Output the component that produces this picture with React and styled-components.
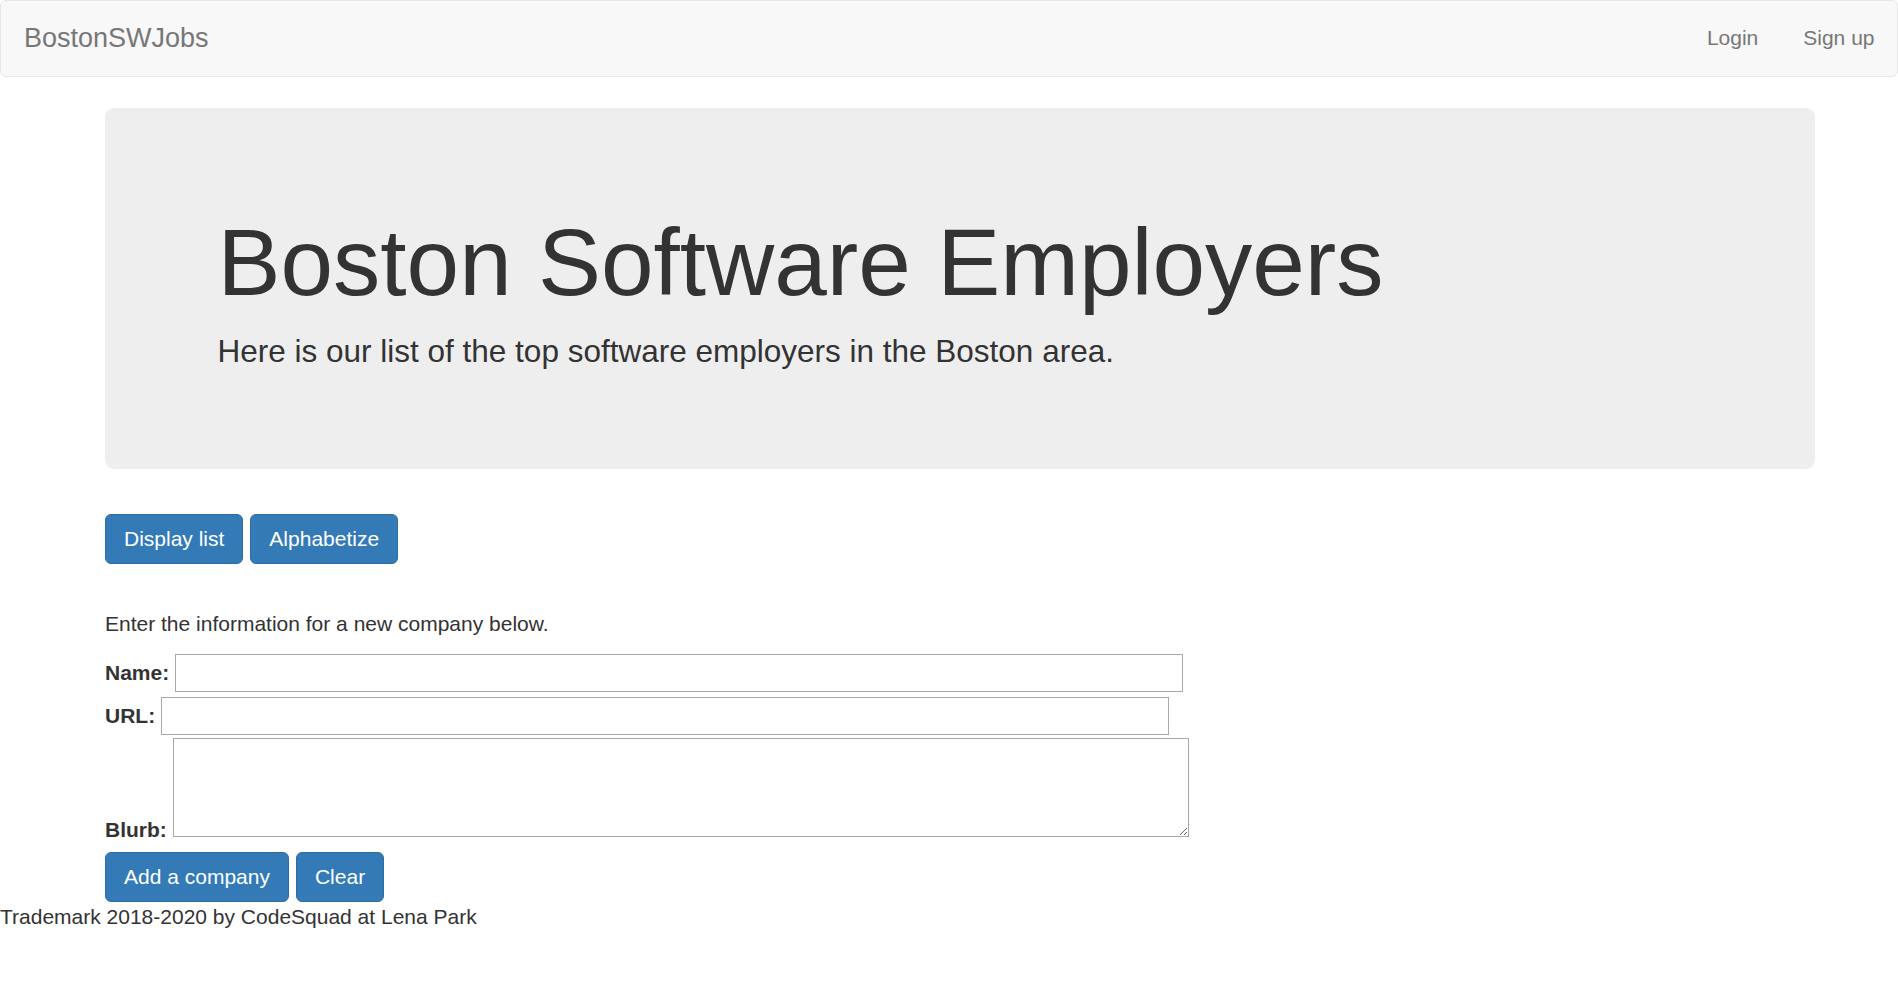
import React from 'react';
import styled, { createGlobalStyle } from 'styled-components';

const GlobalStyle = createGlobalStyle`
  html, body {
    margin: 0;
    padding: 0;
    background: #fff;
  }
  body {
    font-family: 'Liberation Sans', Arial, Helvetica, sans-serif;
    font-size: 21px;
    line-height: 30px;
    color: #333;
  }
  * {
    box-sizing: border-box;
  }
`;

const App = () => {
  return (
    <>
      <GlobalStyle />
      <Navbar>
        <Brand href="#">BostonSWJobs</Brand>
        <NavLinks>
          <NavLink href="#">Login</NavLink>
          <NavLink href="#">Sign up</NavLink>
        </NavLinks>
      </Navbar>
      <Container>
        <Jumbotron>
          <JumboInner>
            <Title>Boston Software Employers</Title>
            <Lead>Here is our list of the top software employers in the Boston area.</Lead>
          </JumboInner>
        </Jumbotron>
        <ButtonRow>
          <PrimaryButton>Display list</PrimaryButton>
          <PrimaryButton>Alphabetize</PrimaryButton>
        </ButtonRow>
        <Intro>Enter the information for a new company below.</Intro>
        <Form onSubmit={e => e.preventDefault()}>
          <FieldRow>
            <Label htmlFor="name">Name:</Label>
            <TextInput id="name" type="text" />
          </FieldRow>
          <FieldRow $top={5}>
            <Label htmlFor="url">URL:</Label>
            <TextInput id="url" type="text" />
          </FieldRow>
          <FieldRow $top={3} $bottom>
            <Label htmlFor="blurb" $bottom>Blurb:</Label>
            <TextArea id="blurb" />
          </FieldRow>
          <ButtonRow $top={15}>
            <PrimaryButton type="submit">Add a company</PrimaryButton>
            <PrimaryButton type="button">Clear</PrimaryButton>
          </ButtonRow>
        </Form>
      </Container>
      <Footer>Trademark 2018-2020 by CodeSquad at Lena Park</Footer>
    </>
  );
};

export default App;

const Navbar = styled.nav`
  display: flex;
  justify-content: space-between;
  align-items: stretch;
  height: 77px;
  background-color: #f8f8f8;
  border: 1px solid #e7e7e7;
  border-radius: 6px;
  margin-bottom: 31px;
`;

const Brand = styled.a`
  display: block;
  padding: 22px 22px 22px 23px;
  font-size: 27px;
  line-height: 30px;
  color: #777;
  text-decoration: none;
`;

const NavLinks = styled.div`
  display: flex;
`;

const NavLink = styled.a`
  display: block;
  padding: 22px 22.5px;
  font-size: 21px;
  line-height: 30px;
  color: #777;
  text-decoration: none;
`;

const Container = styled.div`
  padding: 0 83px 0 105px;
`;

const Jumbotron = styled.div`
  background-color: #eee;
  border-radius: 9px;
  padding: 72px 90px;
  margin-bottom: 45px;
`;

const JumboInner = styled.div`
  padding: 0 22.5px;
`;

const Title = styled.h1`
  margin: 30px 0 15px;
  font-size: 94.5px;
  line-height: 104px;
  font-weight: 500;
  color: #333;
`;

const Lead = styled.p`
  margin: 0 0 22.5px;
  font-size: 31.5px;
  line-height: 45px;
  font-weight: 200;
`;

const ButtonRow = styled.div`
  display: flex;
  gap: 7px;
  margin-top: ${props => props.$top || 0}px;
`;

const PrimaryButton = styled.button`
  height: 50px;
  padding: 9px 18px;
  font-family: inherit;
  font-size: 21px;
  line-height: 30px;
  color: #fff;
  background-color: #337ab7;
  border: 1px solid #2e6da4;
  border-radius: 6px;
  cursor: pointer;
  &:hover {
    background-color: #286090;
  }
`;

const Intro = styled.p`
  margin: 45px 0 15px;
`;

const Form = styled.form`
  display: flex;
  flex-direction: column;
`;

const FieldRow = styled.div`
  display: flex;
  align-items: ${props => (props.$bottom ? 'flex-end' : 'center')};
  gap: 6px;
  margin-top: ${props => props.$top || 0}px;
`;

const Label = styled.label`
  font-weight: bold;
  line-height: ${props => (props.$bottom ? '21px' : '30px')};
  margin-bottom: ${props => (props.$bottom ? '-3px' : '0')};
`;

const TextInput = styled.input`
  width: 1008px;
  height: 38px;
  padding: 1px 3px;
  font-family: inherit;
  font-size: 21px;
  border: 1px solid #a9a9a9;
  border-radius: 0;
  background: #fff;
  outline: none;
`;

const TextArea = styled.textarea`
  width: 1016px;
  height: 99px;
  padding: 3px;
  font-family: inherit;
  font-size: 21px;
  border: 1px solid #a9a9a9;
  border-radius: 0;
  background: #fff;
  outline: none;
`;

const Footer = styled.footer`
  margin: 0;
  padding: 0;
`;
